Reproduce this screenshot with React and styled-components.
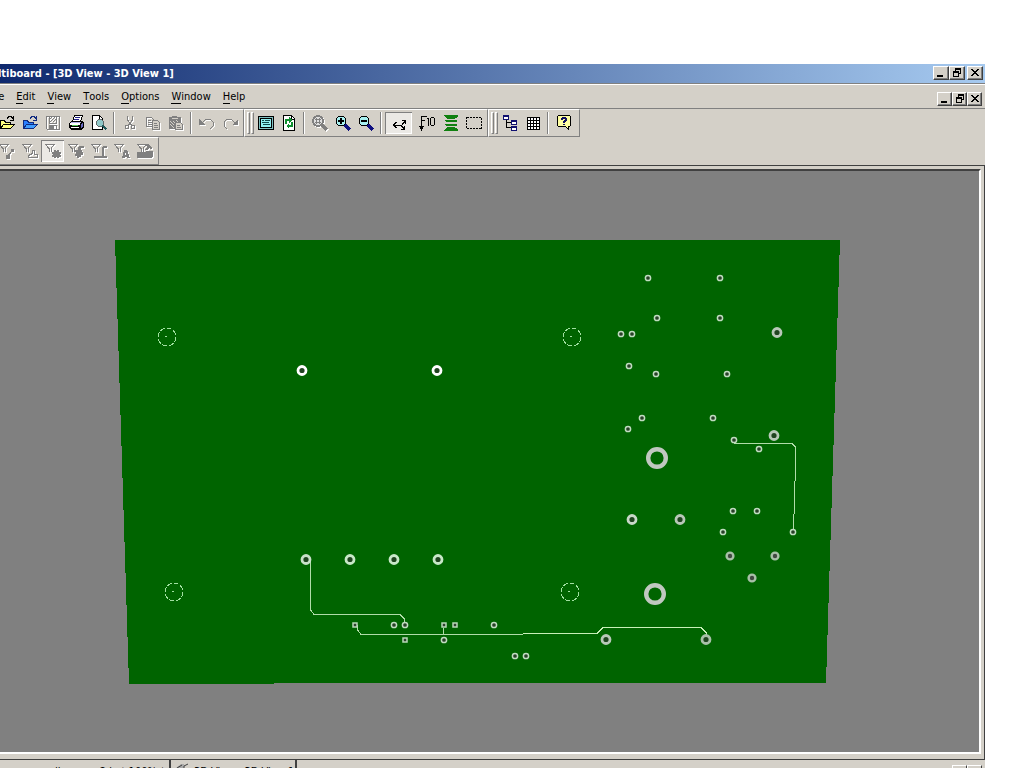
import React from 'react'
import styled, { createGlobalStyle, css } from 'styled-components'

const G = '#808080'

const icons = {
    open: (
        <>
            <path d="M1.500 13.500v-8h4l1 2h5v2" fill="#ffff80" stroke="#000" />
            <path d="M1.500 13.500L4.500 9.500h11l-4 4z" fill="#ffff80" stroke="#000" />
            <path d="M8 3.500l2-2h2l2 2M14.500 1v4h-4" fill="none" stroke="#000" />
        </>
    ),
    openBlue: (
        <>
            <path d="M1.500 13.500v-8h4l1 2h5v2" fill="#2a7fff" stroke="#102a80" />
            <path d="M1.500 13.500L4.500 9.500h11l-4 4z" fill="#3f9cff" stroke="#102a80" />
            <path d="M8 3.500l2-2h2l2 2M14.500 1v4h-4" fill="none" stroke="#102a80" />
        </>
    ),
    save: (
        <>
            <path d="M1.500 1.500h13v13h-12l-1-1z" fill="none" stroke={G} />
            <path d="M4.500 2v6h7V2M5 7l5-5M5 4l2-2M8 7l3-3" fill="none" stroke={G} />
            <path d="M4 10h8v5H4z" fill={G} />
            <path d="M9 11h2v3H9z" fill="#fff" />
        </>
    ),
    print: (
        <>
            <path d="M4.500 6.500l2-6h8l-2 6z" fill="#fff" stroke="#000" />
            <path d="M7 2.500h5M6 4.500h5" stroke="#20208a" />
            <path d="M1 8l2-2h11l2 1v5l-3 3H3l-2-2z" fill="#000" />
            <path d="M2 8h10v2H2zM3 12h8v1H3z" fill="#fff" />
            <path d="M3 7h10v1H3z" fill="#b0b0e8" />
            <path d="M4 10h6v1H4z" fill="#50c850" />
            <path d="M13 9l2-2v4l-2 2z" fill="#6868c0" />
        </>
    ),
    preview: (
        <>
            <path d="M1.500 .5h7l3 3v11h-10z" fill="#fff" stroke="#000" />
            <path d="M8.500 1v3h3" fill="none" stroke="#000" />
            <circle cx="9" cy="8" r="3.500" fill="#90c8c8" stroke="#606868" />
            <path d="M11.500 10.500l4 4" stroke="#205858" strokeWidth="2" />
        </>
    ),
    cut: (
        <>
            <path d="M5.500 1v4l4 5M10.500 1v4l-4 5" fill="none" stroke={G} />
            <circle cx="5" cy="12" r="2" fill="none" stroke={G} />
            <circle cx="11" cy="12" r="2" fill="none" stroke={G} />
        </>
    ),
    copy: (
        <>
            <path d="M1.500 2.500h5l2 2v7h-7zM3 5.500h3M3 7.500h4M3 9.500h4" fill="none" stroke={G} />
            <path d="M7.500 5.500h5l2 2v7h-7z" fill="#d4d0c8" stroke={G} />
            <path d="M9 8.500h3M9 10.500h4M9 12.500h4" stroke={G} />
        </>
    ),
    paste: (
        <>
            <path d="M1 2h3V1h5v1h4v12H1z" fill={G} />
            <path d="M4 3.500h6M2 6l4 4M2 9l4 4M5 6l4 4M8 5l3 3" stroke="#d4d0c8" />
            <path d="M7.500 7.500h5l2 2v5h-7z" fill="#d4d0c8" stroke={G} />
            <path d="M9 10.500h3M9 12.500h4" stroke={G} />
        </>
    ),
    undo: (
        <>
            <path d="M3 8l4-4h4l3 3v4l-3 3" fill="none" stroke={G} />
            <path d="M0 4v6h6z" fill={G} />
        </>
    ),
    redo: (
        <>
            <path d="M13 8L9 4H5L2 7v4l3 3" fill="none" stroke={G} />
            <path d="M16 4v6h-6z" fill={G} />
        </>
    ),
    board: (
        <>
            <path d="M0 1h16v14H0z" fill="#000" />
            <path d="M1 2h14v12H1z" fill="#80c0c0" />
            <path d="M2 3h12v10H2z" fill="#000" />
            <path d="M3 4h10v8H3z" fill="#90f0f0" />
            <path d="M4 5.500h2M7 5.500h5M4 7.500h7M5 9.500h7" stroke="#104848" />
        </>
    ),
    refresh: (
        <>
            <path d="M2.500 .5h8l3 3v12h-11z" fill="#fff" stroke="#000" />
            <path d="M10.500 1v3h3" fill="none" stroke="#000" />
            <path d="M5 9V5h3M11 7v4H8" fill="none" stroke="#109030" strokeWidth="2" />
            <path d="M8 2l3 3-3 3zM8 8l-3 3 3 3z" fill="#109030" />
        </>
    ),
    zoomArea: (
        <>
            <circle cx="6" cy="6" r="5" fill="#e0e0e0" stroke={G} strokeWidth="2" />
            <path d="M4.500 3v6M7.500 3v6M3 4.500h6M3 7.500h6" stroke={G} />
            <path d="M10 10l5 5" stroke={G} strokeWidth="3" />
        </>
    ),
    zoomIn: (
        <>
            <circle cx="6" cy="6" r="5" fill="#a8f0f0" stroke="#000" />
            <path d="M3 6h6M6 3v6" stroke="#000" strokeWidth="2" />
            <path d="M10 10l5 5" stroke="#101080" strokeWidth="3" />
        </>
    ),
    zoomOut: (
        <>
            <circle cx="6" cy="6" r="5" fill="#a8f0f0" stroke="#000" />
            <path d="M3 6h6" stroke="#000" strokeWidth="2" />
            <path d="M10 10l5 5" stroke="#101080" strokeWidth="3" />
        </>
    ),
    rubber: (
        <path d="M4.500 7l-3 3 3 3M2 10.500h7.500l4-5M10 5.500h3.500v3M8.500 10l4 4M12.500 11v3.500h-4" fill="none" stroke="#000" />
    ),
    ruler: (
        <>
            <path d="M2.500 15V1.500H8M3 5.500h3M0 11.500h1l1.500 3L4 11.500h1" fill="none" stroke="#000" />
            <path d="M8 3.500h1.500V11M12.500 2.500h2l1 1v6l-1 1h-2l-1-1v-6z" fill="none" stroke="#000" />
        </>
    ),
    layers: (
        <path d="M1 0h14v1l-2 2H3L1 1zM2 5h12v1l-1 1H3L2 6zM2 9h12v1l-1 1H3l-1-1zM3 13h10l2 2v1H1v-1zM4 3h8v1H4zM4 12h8v1H4z" fill="#108010" />
    ),
    select: <path d="M.5 2.500h15v11H.5z" fill="none" stroke="#000" strokeDasharray="2 1" />,
    tree: (
        <>
            <path d="M4.500 5v7.500H10M5 7.500h5" fill="none" stroke="#000" />
            <path d="M1 0h6v5H1zM9 5h6v5H9zM9 11h6v5H9z" fill="#101070" />
            <path d="M2 2h4v2H2zM10 7h4v2h-4zM10 13h4v2h-4z" fill="#fff" />
        </>
    ),
    grid: (
        <>
            <path d="M2 2h12v12H2z" fill="#fff" />
            <path d="M2.500 2v13M5.500 2v13M8.500 2v13M11.500 2v13M14.500 2v13M2 2.500h13M2 5.500h13M2 8.500h13M2 11.500h13M2 14.500h13" stroke="#000" />
        </>
    ),
    help: (
        <>
            <path d="M2.500 .5h11l1 1v9l-1 1h-1v3l-3-3h-7l-1-1v-9z" fill="#ffffa0" stroke="#000" />
            <path d="M5 3h1V2h4v1h1v3h-1v1H9v1H7V6h1V5h1V4H7v1H5zM7 9h2v1H7z" fill="#101060" />
        </>
    ),
}

const funnel = <path d="M0 1.500h10M1 2l3 3.500V9M9 2L6 5.500V9" fill="none" stroke={G} />

const filters = [
    { label: 'Filter traces', art: <path d="M8 14l5-6M7 12h3v3H7zM12 6h2v2h-2z" fill={G} stroke={G} /> },
    { label: 'Filter parts', art: <path d="M6.500 14.500h9v-3h-3v-4h-2v3l-4 2z" fill="none" stroke={G} /> },
    { label: 'Filter vias', pressed: true, art: <path d="M9 7h2v1h1V7h2v2h2v2h-1v1h1v2h-2v1h-2v-1h-1v1H9v-1H7v-2h1v-1H7V9h2z" fill={G} /> },
    { label: 'Filter pads', art: <path d="M16 3v2h-3v2h1v2h1v3h-2v2h-2v1H9v-2H7v-2h1V9H7V7h3V4l1-1z" fill={G} /> },
    { label: 'Filter copper', art: <path d="M16 3v2h-3v8h3v2H3v-2h8V4l1-1z" fill={G} /> },
    { label: 'Filter text', art: <path d="M10 7h3l3 8h-3v-1h-2v1H8zM11 10v2h1v-2z" fill={G} fillRule="evenodd" /> },
    { label: 'Filter other', art: <path d="M0 9h8l2-1h6v5l-2 2H0zM9 1h2l4 4-1 1-2-1-2 2H8l2-3z" fill={G} /> },
]

const mainTools = [
    [
        { label: 'Open', icon: 'open' },
        { label: 'Open project', icon: 'openBlue' },
        { label: 'Save', icon: 'save', off: true },
        { label: 'Print', icon: 'print' },
        { label: 'Print preview', icon: 'preview' },
        null,
        { label: 'Cut', icon: 'cut', off: true },
        { label: 'Copy', icon: 'copy', off: true },
        { label: 'Paste', icon: 'paste', off: true },
        null,
        { label: 'Undo', icon: 'undo', off: true },
        { label: 'Redo', icon: 'redo', off: true },
    ],
    [
        { label: 'Board', icon: 'board' },
        { label: 'Refresh', icon: 'refresh' },
        null,
        { label: 'Zoom area', icon: 'zoomArea', off: true },
        { label: 'Zoom in', icon: 'zoomIn' },
        { label: 'Zoom out', icon: 'zoomOut' },
        null,
        { label: 'Rubber band', icon: 'rubber', pressed: true, wide: true },
        { label: 'Ruler', icon: 'ruler', wide: true },
        { label: 'Layers', icon: 'layers' },
        { label: 'Select', icon: 'select' },
    ],
    [
        { label: 'Project tree', icon: 'tree' },
        { label: 'Spreadsheet', icon: 'grid' },
        null,
        { label: 'Help', icon: 'help' },
    ],
]

const menus = ['File', 'Edit', 'View', 'Tools', 'Options', 'Window', 'Help']

const smallPads = [
    [648, 278], [720, 278], [657, 318], [720, 318], [621, 334], [632, 334],
    [629, 366], [656, 374], [727, 374], [642, 418], [713, 418], [628, 429],
    [734, 440], [759, 449], [733, 511], [757, 511], [723, 532], [793, 532],
    [394, 625], [405, 625], [494, 625], [444, 640], [515, 656], [526, 656],
]
const squarePads = [[355, 625], [444, 625], [455, 625], [405, 640]]
const mediumPads = [
    [777, 332, '#b8c8b8'], [774, 435, '#b8c8b8'], [632, 519, '#c8d8c8'], [680, 519, '#b8c8b8'],
    [606, 639, '#b8c8b8'], [706, 639, '#a8c0a8'], [306, 559, '#c8e0c8'], [350, 559, '#c8e8c8'],
    [394, 559, '#c8e8c8'], [438, 559, '#c8e8c8'], [302, 370, '#fff'], [437, 370, '#fff'],
]
const midPads = [[730, 556], [775, 556], [752, 578]]
const bigPads = [[657, 458], [655, 594]]
const holes = [[167, 337], [572, 337], [174, 592], [570, 592]]

const Board = () => (
    <Canvas viewBox="-28 171 1007 581" role="img" aria-label="Circuit board">
        <g shapeRendering="crispEdges">
            <path d="M115 240H840L826 683H274L273 684H129z" fill="#006400" />
            <g fill="none" stroke="#b0dca8">
                <path d="M310.500 560V610L314 614.500H400L404.500 619V625" />
                <path d="M357.500 625V630L361 634.500H523M443.500 628V634" />
                <path d="M523 633.500H597L603 627.500H701L706.500 633V638" stroke="#c8f0b8" />
                <path d="M734 443.500H792L795.500 447V465L793.500 531" />
            </g>
            {holes.map(([x, y]) => (
                <g key={x} fill="none" stroke="#a0e0a0">
                    <circle cx={x} cy={y} r="9" strokeDasharray="5 2" />
                    <path d={`M${x - 2} ${y - .5}h2`} />
                </g>
            ))}
        </g>
        {smallPads.map(([x, y]) => (
            <circle key={`${x}-${y}`} cx={x} cy={y} r="2.600" fill="#284028" stroke="#c0dcc0" strokeWidth="1.500" />
        ))}
        {squarePads.map(([x, y]) => (
            <rect key={`${x}-${y}`} x={x - 2} y={y - 2} width="4" height="4" fill="#304030" stroke="#b8d8b8" strokeWidth="1.500" />
        ))}
        {midPads.map(([x, y]) => (
            <circle key={x} cx={x} cy={y} r="3.400" fill="#404840" stroke="#a8c0a8" strokeWidth="2.400" />
        ))}
        {mediumPads.map(([x, y, color]) => (
            <circle key={`${x}-${y}`} cx={x} cy={y + .5} r="4" fill="#204420" stroke={color} strokeWidth="2.800" />
        ))}
        {bigPads.map(([x, y]) => (
            <circle key={x} cx={x} cy={y} r="8.800" fill="#006400" stroke="#c0c8c0" strokeWidth="4.400" />
        ))}
    </Canvas>
)

const Tool = ({ tool }) => (
    <ToolButton aria-label={tool.label} $wide={tool.wide} $pressed={tool.pressed}>
        <Icon viewBox="0 0 16 16" $off={tool.off}>{icons[tool.icon]}</Icon>
    </ToolButton>
)

const WindowButtons = ({ inner }) => (
    <Caps $inner={inner}>
        <CapButton aria-label="Minimize" $inner={inner}>
            <CapIcon viewBox="0 0 10 10"><path d="M1 7h6v2H1z" /></CapIcon>
        </CapButton>
        <CapButton aria-label="Restore" $inner={inner}>
            <CapIcon viewBox="0 0 10 10">
                <path d="M3 0h6v6H7V5h1V2H4v1H3zM1 3h6v6H1zM2 5v3h4V5z" fillRule="evenodd" />
            </CapIcon>
        </CapButton>
        <CapButton aria-label="Close" $inner={inner} $close>
            <CapIcon viewBox="0 0 10 10">
                <path d="M1 1h2v1h1v1h2V2h1V1h2v1H8v1H7v1H6v1h1v1h1v1h1v1H7V7H6V6H4v1H3v1H1V7h1V6h1V5h1V4H3V3H2V2H1z" />
            </CapIcon>
        </CapButton>
    </Caps>
)

const App = () => (
    <>
        <GlobalStyle />
        <Page>
            <AppWindow>
                <TitleBar>
                    <Title>Multiboard - [3D View - 3D View 1]</Title>
                    <WindowButtons />
                </TitleBar>
                <MenuBar>
                    {menus.map(name => (
                        <MenuButton key={name}><Key>{name[0]}</Key>{name.slice(1)}</MenuButton>
                    ))}
                    <WindowButtons inner />
                </MenuBar>
                <ToolRow>
                    {mainTools.map((band, i) => (
                        <Band key={i}>
                            {i > 0 && <Grips><Grip /><Grip /></Grips>}
                            {band.map((tool, j) => tool ? <Tool key={j} tool={tool} /> : <Separator key={j} />)}
                        </Band>
                    ))}
                </ToolRow>
                <ToolRow>
                    <Band>
                        {filters.map(f => (
                            <ToolButton key={f.label} aria-label={f.label} $pressed={f.pressed}>
                                <Icon viewBox="0 0 16 16" $off>{funnel}{f.art}</Icon>
                            </ToolButton>
                        ))}
                    </Band>
                </ToolRow>
                <Frame>
                    <View><Board /></View>
                </Frame>
                <TabBar>
                    <Tab $first>allpowersuper dimmer - 2 bot 100% *</Tab>
                    <Tab>
                        <TabIcon viewBox="0 0 16 16">
                            <path d="M1 5l5-4h3v10H1z" fill="#a8a8a8" />
                            <path d="M9 8V3l4-2M2 5l5-3" stroke="#404040" fill="none" />
                        </TabIcon>
                        3D View - 3D View 1
                    </Tab>
                    <TabRest>
                        <ScrollButton aria-label="Scroll tabs left" />
                        <ScrollButton aria-label="Scroll tabs right" />
                    </TabRest>
                </TabBar>
            </AppWindow>
        </Page>
    </>
)

export default App


const GlobalStyle = createGlobalStyle`
* {
  box-sizing: border-box;
}
body {
  margin: 0;
  background: #fff;
  overflow: hidden;
}
button {
  font: inherit;
  color: inherit;
  padding: 0;
  border: 0;
  background: none;
}
`

const Page = styled.div`
height: 100vh;
padding: 64px 39px 0 0;
overflow: hidden;
font-family: "DejaVu Sans Condensed", "DejaVu Sans", sans-serif;
font-size: 11px;
color: #000;
`

/* the window hangs over the left edge and the bottom of the screen */
const AppWindow = styled.div`
display: flex;
flex-direction: column;
height: calc(100% + 18px);
margin-left: -28px;
background: #d4d0c8;
`

const TitleBar = styled.header`
display: flex;
align-items: center;
justify-content: space-between;
height: 20px;
padding: 0 2px 1px 9px;
border-bottom: 1px solid #808080;
background: linear-gradient(to right, #0a246a, #a6caf0);
flex: none;
`

const Title = styled.h1`
margin: 0;
font-size: 11px;
font-weight: bold;
color: #fff;
white-space: nowrap;
`

const Caps = styled.div`
display: flex;
margin-left: auto;
padding-top: ${props => props.$inner ? '4px' : '0'};
`

const CapButton = styled.button`
display: flex;
align-items: center;
justify-content: center;
width: ${props => props.$inner ? '15px' : '16px'};
height: 14px;
margin-left: ${props => props.$close && !props.$inner ? '2px' : '0'};
background: #d4d0c8;
border: 1px solid;
border-color: #fff #404040 #404040 #fff;
box-shadow: inset -1px -1px 0 #808080;
`

const CapIcon = styled.svg`
width: 10px;
height: 10px;
shape-rendering: crispEdges;
`

const MenuBar = styled.nav`
display: flex;
align-items: center;
height: 25px;
padding: 0 3px 0 9px;
border-top: 1px solid #fff;
border-bottom: 1px solid #808080;
flex: none;
`

const MenuButton = styled.button`
padding: 0 6px;
line-height: 16px;
`

const Key = styled.span`
display: inline-block;
line-height: 12px;
border-bottom: 1px solid #000;
`

const ToolRow = styled.div`
display: flex;
height: 28px;
padding-left: 23px;
flex: none;
`

const Band = styled.div`
display: flex;
align-items: center;
padding-right: 2px;
border-top: 1px solid #fff;
border-right: 1px solid #808080;
border-bottom: 1px solid #808080;

& + & {
  border-left: 1px solid #fff;
}
& + &:last-child {
  padding-right: 4px;
}
`

const Grips = styled.div`
display: flex;
gap: 1px;
margin-left: 2px;
`

const Grip = styled.div`
width: 3px;
height: 22px;
border: 1px solid;
border-color: #fff #808080 #808080 #fff;
`

const Separator = styled.div`
width: 2px;
height: 22px;
margin: 0 3px;
border-left: 1px solid #808080;
border-right: 1px solid #fff;
`

const ToolButton = styled.button`
display: flex;
align-items: center;
width: ${props => props.$wide ? '27px' : '23px'};
height: 22px;
padding-left: ${props => props.$wide ? '7px' : '4px'};
${props => props.$pressed && css`
  background: #ebe9e5;
  box-shadow: inset 1px 1px 0 #808080, inset -1px -1px 0 #fff;
`}
`

const Icon = styled.svg`
width: 16px;
height: 16px;
flex: none;
shape-rendering: crispEdges;
${props => props.$off && css`
  filter: drop-shadow(1px 1px 0 #fff);
`}
`

const Frame = styled.main`
flex: 1;
min-height: 0;
display: flex;
padding: 3px 3px 5px 0;
border: 1px solid #404040;
border-left: 0;
`

const View = styled.div`
flex: 1;
display: flex;
min-width: 0;
background: #808080;
border-top: 2px solid #404040;
border-right: 2px solid #fff;
border-bottom: 2px solid #fff;
`

const Canvas = styled.svg`
width: 100%;
height: 100%;
`

const TabBar = styled.footer`
display: flex;
height: 26px;
flex: none;
`

const Tab = styled.button`
display: flex;
align-items: center;
gap: 3px;
height: 22px;
padding: 0 1px 0 4px;
white-space: nowrap;
border-right: 2px solid #404040;
${props => props.$first && css`
  width: 199px;
  padding-right: 4px;
  justify-content: flex-end;
`}
`

const TabIcon = styled.svg`
width: 16px;
height: 16px;
`

const TabRest = styled.div`
flex: 1;
display: flex;
justify-content: flex-end;
padding: 5px 3px 0 0;
`

const ScrollButton = styled.button`
width: 15px;
height: 15px;
border: 1px solid;
border-color: #fff #404040 #404040 #fff;
`
